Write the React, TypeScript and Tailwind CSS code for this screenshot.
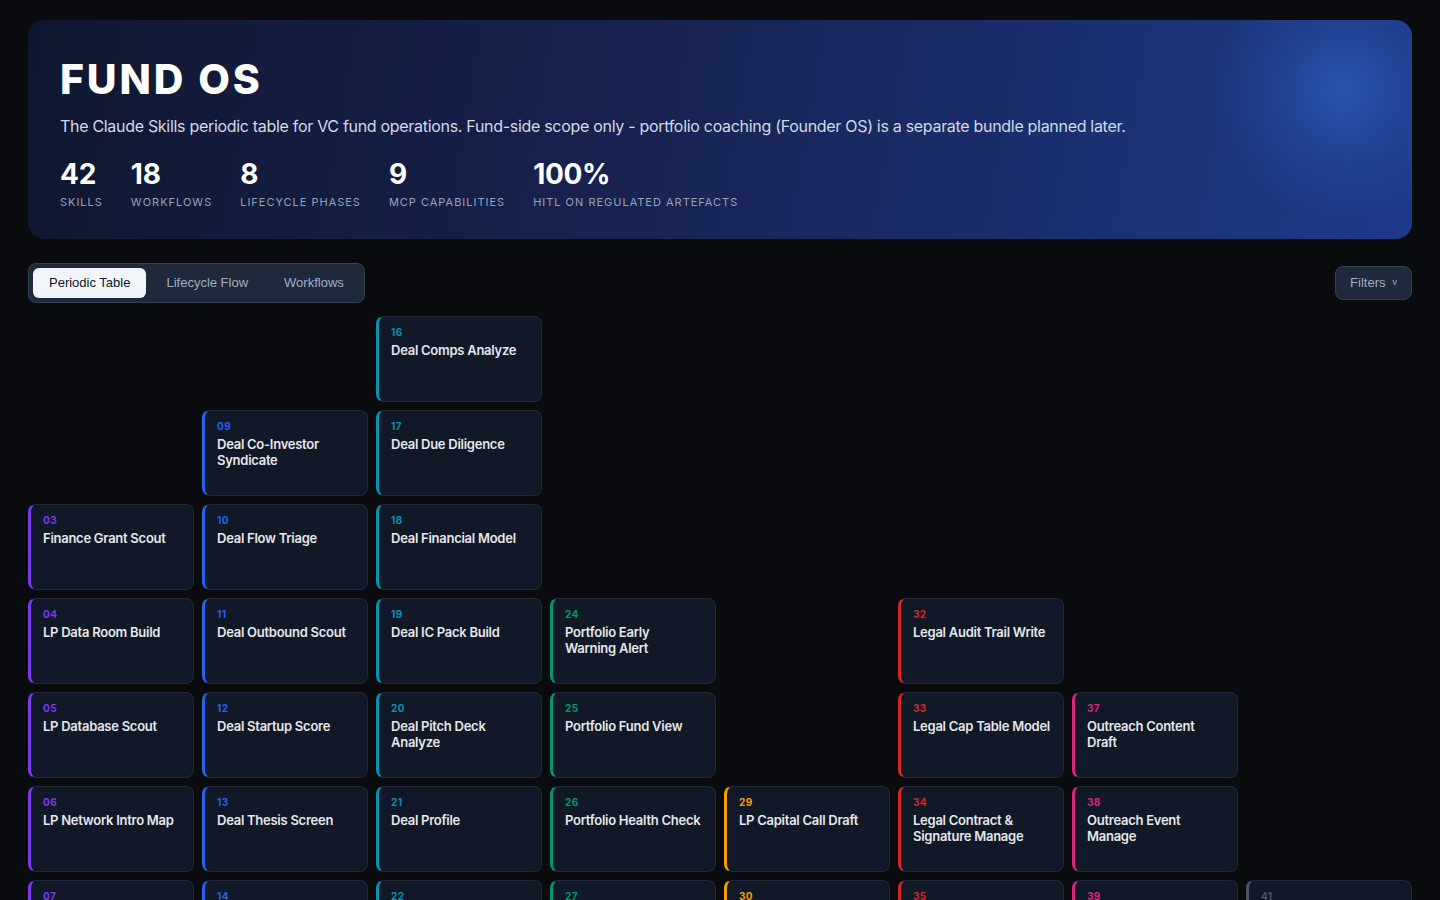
import React from "react";

type Skill = { n: string; title: string; col: number; row: number };

const colStart: Record<number, string> = {
  1: "col-start-1",
  2: "col-start-2",
  3: "col-start-3",
  4: "col-start-4",
  5: "col-start-5",
  6: "col-start-6",
  7: "col-start-7",
  8: "col-start-8",
};
const rowStart: Record<number, string> = {
  1: "row-start-1",
  2: "row-start-2",
  3: "row-start-3",
  4: "row-start-4",
  5: "row-start-5",
  6: "row-start-6",
  7: "row-start-7",
};
const borderCol: Record<number, string> = {
  1: "border-l-[#7c3aed]",
  2: "border-l-[#2563eb]",
  3: "border-l-[#0891b2]",
  4: "border-l-[#059669]",
  5: "border-l-[#f59e0b]",
  6: "border-l-[#dc2626]",
  7: "border-l-[#db2777]",
  8: "border-l-[#4b5563]",
};
const numCol: Record<number, string> = {
  1: "text-[#7c3aed]",
  2: "text-[#2563eb]",
  3: "text-[#0891b2]",
  4: "text-[#059669]",
  5: "text-[#f59e0b]",
  6: "text-[#dc2626]",
  7: "text-[#db2777]",
  8: "text-[#4b5563]",
};

const skills: Skill[] = [
  { n: "03", title: "Finance Grant Scout", col: 1, row: 3 },
  { n: "04", title: "LP Data Room Build", col: 1, row: 4 },
  { n: "05", title: "LP Database Scout", col: 1, row: 5 },
  { n: "06", title: "LP Network Intro Map", col: 1, row: 6 },
  { n: "07", title: "LP Quarterly Report Draft", col: 1, row: 7 },
  { n: "09", title: "Deal Co-Investor\nSyndicate", col: 2, row: 2 },
  { n: "10", title: "Deal Flow Triage", col: 2, row: 3 },
  { n: "11", title: "Deal Outbound Scout", col: 2, row: 4 },
  { n: "12", title: "Deal Startup Score", col: 2, row: 5 },
  { n: "13", title: "Deal Thesis Screen", col: 2, row: 6 },
  { n: "14", title: "Deal Term Sheet Draft", col: 2, row: 7 },
  { n: "16", title: "Deal Comps Analyze", col: 3, row: 1 },
  { n: "17", title: "Deal Due Diligence", col: 3, row: 2 },
  { n: "18", title: "Deal Financial Model", col: 3, row: 3 },
  { n: "19", title: "Deal IC Pack Build", col: 3, row: 4 },
  { n: "20", title: "Deal Pitch Deck\nAnalyze", col: 3, row: 5 },
  { n: "21", title: "Deal Profile", col: 3, row: 6 },
  { n: "22", title: "Deal Reference Check", col: 3, row: 7 },
  { n: "24", title: "Portfolio Early\nWarning Alert", col: 4, row: 4 },
  { n: "25", title: "Portfolio Fund View", col: 4, row: 5 },
  { n: "26", title: "Portfolio Health Check", col: 4, row: 6 },
  { n: "27", title: "Portfolio KPI Report", col: 4, row: 7 },
  { n: "29", title: "LP Capital Call Draft", col: 5, row: 6 },
  { n: "30", title: "LP Distribution Notice", col: 5, row: 7 },
  { n: "32", title: "Legal Audit Trail Write", col: 6, row: 4 },
  { n: "33", title: "Legal Cap Table Model", col: 6, row: 5 },
  { n: "34", title: "Legal Contract &\nSignature Manage", col: 6, row: 6 },
  { n: "35", title: "Legal KYC Check", col: 6, row: 7 },
  { n: "37", title: "Outreach Content\nDraft", col: 7, row: 5 },
  { n: "38", title: "Outreach Event\nManage", col: 7, row: 6 },
  { n: "39", title: "Outreach Newsletter Draft", col: 7, row: 7 },
  { n: "41", title: "Ops Meeting Notes", col: 8, row: 7 },
];

const stats = [
  { v: "42", l: "Skills" },
  { v: "18", l: "Workflows" },
  { v: "8", l: "Lifecycle Phases" },
  { v: "9", l: "MCP Capabilities" },
  { v: "100%", l: "HITL on regulated artefacts" },
];

export default function App() {
  return (
    <div
      className="min-h-screen bg-[#0a0b0f] px-7 pt-5 pb-10 text-white"
      style={{ fontFamily: "Inter, 'Noto Sans', sans-serif" }}
    >
      <header className="rounded-2xl bg-[radial-gradient(circle_at_95%_32%,rgba(40,88,176,0.95)_0px,rgba(37,80,165,0.5)_60px,rgba(30,58,138,0)_130px),linear-gradient(100deg,#0f172e_0%,#172352_45%,#1e3a8a_100%)] px-8 pt-[39px] pb-[30px]">
        <h1 className="text-[41px] leading-none font-extrabold tracking-[0.07em] text-white">
          FUND OS
        </h1>
        <p className="mt-[14px] text-[16px] leading-6 tracking-[-0.019em] text-[#d1d9e6]">
          The Claude Skills periodic table for VC fund operations. Fund-side scope only - portfolio
          coaching (Founder OS) is a separate bundle planned later.
        </p>
        <div className="mt-[22px] flex gap-7">
          {stats.map((s) => (
            <div key={s.l} className="flex flex-col">
              <div className="text-[28px] leading-none font-bold tracking-[-0.01em] text-white">{s.v}</div>
              <div className="mt-[7px] text-[11px] leading-[14px] uppercase tracking-[0.09em] text-[#94a3b8]">
                {s.l}
              </div>
            </div>
          ))}
        </div>
      </header>

      <div
        className="mt-6 flex items-center justify-between"
        style={{ fontFamily: "'Liberation Sans', Arial, sans-serif" }}
      >
        <div className="flex gap-1 rounded-lg border border-[#334155] bg-[#1e293b] p-1">
          <button className="h-[30px] rounded-md bg-[#f1f5f9] px-4 text-[13px] text-[#0f172a]">
            Periodic Table
          </button>
          <button className="h-[30px] rounded-md px-4 text-[13px] text-[#a3adbb]">
            Lifecycle Flow
          </button>
          <button className="h-[30px] rounded-md px-4 text-[13px] text-[#a3adbb]">
            Workflows
          </button>
        </div>
        <button className="flex h-[34px] items-center rounded-lg border border-[#334155] bg-[#1e293b] px-[14px] text-[13px] text-[#a3adbb]">
          Filters
          <span className="ml-[7px] text-[9px]">v</span>
        </button>
      </div>

      <div className="mt-[13px] grid grid-cols-8 auto-rows-[86px] gap-2">
        {skills.map((s) => (
          <div
            key={s.n}
            className={`${colStart[s.col]} ${rowStart[s.row]} rounded-lg border border-[#1f2937] border-l-[3px] ${borderCol[s.col]} bg-[#111827] pl-3 pr-2 pt-[9px]`}
          >
            <div className={`text-[10px] leading-3 font-bold tracking-[0.04em] ${numCol[s.col]}`}>
              {s.n}
            </div>
            <div className="mt-1 whitespace-pre-line text-[13px] leading-4 font-semibold tracking-[-0.02em] text-[#e5e7eb]">
              {s.title}
            </div>
          </div>
        ))}
      </div>
    </div>
  );
}
